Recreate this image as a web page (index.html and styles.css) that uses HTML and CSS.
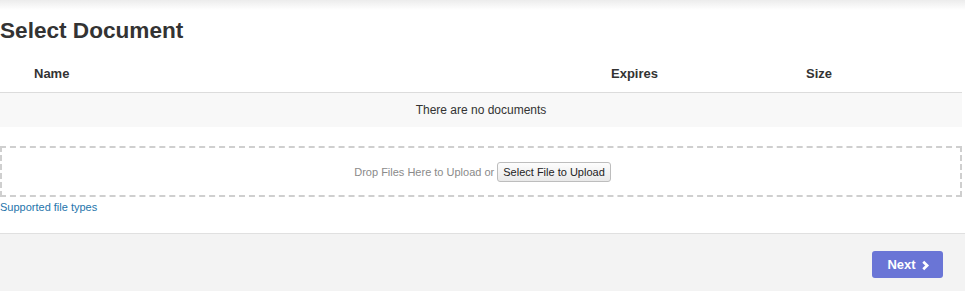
FILE: index.html
```html
<!DOCTYPE html>
<html>
<head>
<meta charset="utf-8">
<link rel="stylesheet" href="styles.css">
</head>
<body>
<div class="topshade"></div>
<main class="content">
  <h1 class="title">Select Document</h1>
  <div class="table">
    <div class="thead">
      <div class="col-name">Name</div>
      <div class="col-exp">Expires</div>
      <div class="col-size">Size</div>
    </div>
    <div class="empty">There are no documents</div>
  </div>
  <div class="dropzone">
    <span class="drop-text">Drop Files Here to Upload or</span>
    <button class="select-btn" type="button">Select File to Upload</button>
  </div>
  <a class="types" href="#">Supported file types</a>
</main>
<footer class="footer">
  <button class="next" type="button">Next
    <svg class="chev" viewBox="0 0 10 12" width="9" height="11"><path d="M2.5 1.8 L6.8 6 L2.5 10.2" fill="none" stroke="#fff" stroke-width="3" stroke-linejoin="miter"/></svg>
  </button>
</footer>
</body>
</html>
```
FILE: styles.css
```css
* { box-sizing: border-box; }
html, body { margin: 0; padding: 0; }
body {
  width: 965px;
  height: 291px;
  overflow: hidden;
  background: #fff;
  font-family: "Liberation Sans", Arial, sans-serif;
  color: #333;
  display: flex;
  flex-direction: column;
}
.topshade {
  height: 10px;
  background: linear-gradient(to bottom, #ececec, #ffffff);
}
.content {
  width: 962px;
  display: flex;
  flex-direction: column;
}
.title {
  margin: 10px 0 0 0;
  font-size: 22.6px;
  font-weight: bold;
  line-height: 22px;
  color: #333;
}
.table { margin-top: 24px; }
.thead {
  display: grid;
  grid-template-columns: 577px 195px 1fr;
  padding-left: 34px;
  height: 27px;
  align-items: start;
  font-size: 13px;
  font-weight: bold;
  line-height: 15px;
  border-bottom: 1px solid #dcdcdc;
  color: #333;
}
.empty {
  height: 34px;
  background: #f8f8f8;
  font-size: 12px;
  line-height: 34px;
  text-align: center;
  color: #333;
}
.dropzone {
  margin-top: 19px;
  height: 51px;
  border: 2px dashed #cfcfcf;
  display: flex;
  align-items: center;
  justify-content: center;
  gap: 3px;
  padding-left: 3px;
}
.drop-text {
  font-size: 11px;
  color: #8a8a8a;
}
.select-btn {
  font-family: "Liberation Sans", Arial, sans-serif;
  font-size: 11px;
  color: #222;
  height: 20px;
  padding: 0 5px;
  border: 1px solid #bdbdbd;
  border-radius: 3px;
  background: linear-gradient(to bottom, #fdfdfd, #e9e9e9);
}
.types {
  margin-top: 4px;
  font-size: 11px;
  line-height: 13px;
  color: #2474ab;
  text-decoration: none;
  align-self: flex-start;
}
.footer {
  margin-top: auto;
  height: 58px;
  background: #f3f3f3;
  border-top: 1px solid #e0e0e0;
  display: flex;
  justify-content: flex-end;
  align-items: flex-start;
  padding: 17px 22px 0 0;
}
.next {
  width: 71px;
  height: 27px;
  background: #6a75d6;
  color: #fff;
  border: none;
  border-radius: 3px;
  font-family: "Liberation Sans", Arial, sans-serif;
  font-size: 13px;
  font-weight: bold;
  display: flex;
  align-items: center;
  justify-content: center;
  gap: 5px;
  padding: 0 0 0 2px;
}
.chev { display: block; margin-top: 1px; }
```
